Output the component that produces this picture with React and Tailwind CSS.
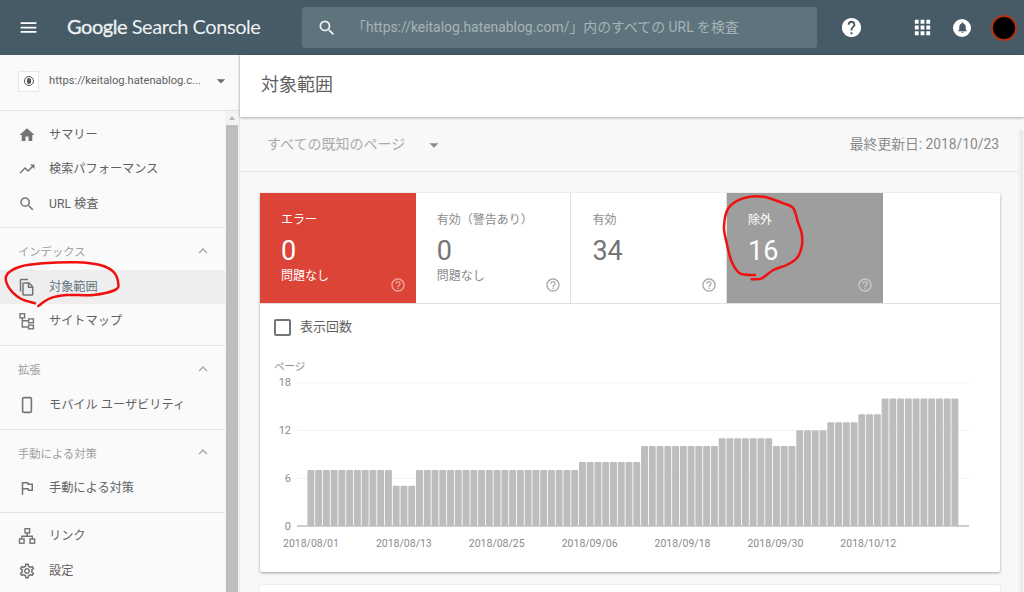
import {
  MdMenu, MdSearch, MdHelp, MdApps, MdNotifications, MdHome, MdTrendingUp,
  MdOutlineFlag, MdOutlineSettings, MdExpandLess, MdArrowDropDown, MdHelpOutline,
} from 'react-icons/md';

const font = { fontFamily: 'Roboto, "Noto Sans CJK JP", sans-serif' };

// 84 days of indexed page counts, read off the chart
const runs = [[7, 11], [5, 3], [7, 21], [8, 8], [10, 10], [11, 7], [10, 3], [12, 4], [13, 4], [14, 3], [16, 10]];
const bars = runs.flatMap(([value, count]) => Array(count).fill(value));
const dates = ['2018/08/01', '2018/08/13', '2018/08/25', '2018/09/06', '2018/09/18', '2018/09/30', '2018/10/12'];

function smooth(points) {
  let d = `M${points[0][0]} ${points[0][1]}`;
  for (let i = 0; i < points.length - 1; i++) {
    const p0 = points[Math.max(i - 1, 0)];
    const p1 = points[i];
    const p2 = points[i + 1];
    const p3 = points[Math.min(i + 2, points.length - 1)];
    const c1 = [p1[0] + (p2[0] - p0[0]) / 6, p1[1] + (p2[1] - p0[1]) / 6];
    const c2 = [p2[0] - (p3[0] - p1[0]) / 6, p2[1] - (p3[1] - p1[1]) / 6];
    d += ` C${c1[0]} ${c1[1]} ${c2[0]} ${c2[1]} ${p2[0]} ${p2[1]}`;
  }
  return d;
}

const ringSidebar = [[38.3, 306], [50, 298.3], [66.7, 295], [93.3, 295], [115, 290], [118.3, 283.3], [113.3, 271.7], [100, 265], [76.7, 262.3], [43.3, 263.3], [20, 266.7], [6.7, 275], [8.3, 286.7], [20, 298.3], [35, 303.3]];
const ringTab = [[755, 275], [740, 273.3], [731.7, 261.7], [726.7, 243.3], [724, 226.7], [728.3, 208.3], [743.3, 198.3], [763.3, 196.7], [783.3, 203.3], [793.3, 208.3], [798.3, 223.3], [801.7, 233.3], [801.7, 246.7], [796.7, 258.3], [786.7, 265], [773.3, 270], [761.7, 278.3], [751.7, 279.3]];

function CopyIcon() {
  return (
    <svg viewBox="0 0 18 18" className="w-[18px] h-[18px]" fill="none" stroke="currentColor" strokeWidth="1.5">
      <path d="M2.5 13.5V2.2c0-.4.3-.7.7-.7h6.8" />
      <path d="M5.8 5h5.2l3.7 3.8v7.4c0 .4-.3.8-.8.8H5.8c-.4 0-.8-.4-.8-.8V5.8c0-.4.4-.8.8-.8z" />
      <path d="M10.5 5v4.2h4.2" />
    </svg>
  );
}

function SitemapIcon() {
  return (
    <svg viewBox="0 0 18 18" className="w-[18px] h-[18px]" fill="none" stroke="currentColor" strokeWidth="1.4">
      <rect x="2" y="1.7" width="4.6" height="4.2" />
      <rect x="10.6" y="6.9" width="4.8" height="3.8" />
      <rect x="10.6" y="13" width="4.8" height="3.8" />
      <path d="M4.3 6v9h6.3M4.3 8.8h6.3" />
    </svg>
  );
}

function LinkIcon() {
  return (
    <svg viewBox="0 0 18 18" className="w-[18px] h-[18px]" fill="none" stroke="currentColor" strokeWidth="1.4">
      <rect x="7" y="1.7" width="4.6" height="4.2" />
      <rect x="1.5" y="12" width="4.6" height="4.2" />
      <rect x="12" y="12" width="4.6" height="4.2" />
      <path d="M9.2 6v3.2M3.8 12V9.2h10.5V12" />
    </svg>
  );
}

function PhoneIcon() {
  return (
    <svg viewBox="0 0 18 18" className="w-[18px] h-[18px]" fill="none" stroke="currentColor" strokeWidth="1.6">
      <rect x="4.6" y="1.6" width="8.8" height="14.8" rx="1.4" />
    </svg>
  );
}

function NavRow({ icon, label, active }) {
  return (
    <div className={`h-[34.5px] flex items-center pl-[18px] ${active ? 'bg-[#eeeeee] text-[#5f7480]' : 'text-[#616161]'}`}>
      <span className="w-[31px] flex items-center shrink-0 text-[#757575]">{icon}</span>
      <span className="text-[12.2px] whitespace-nowrap">{label}</span>
    </div>
  );
}

function NavSection({ title, children }) {
  return (
    <div className="border-b border-[#e3e3e3] pb-[6.5px]">
      <div className="h-[41.5px] pt-[6px] flex items-center justify-between pl-[18px] pr-[13px]">
        <span className="text-[11.3px] leading-[16px] pt-[3px] text-[#9e9e9e]">{title}</span>
        <MdExpandLess className="text-[#a8a8a8] -mt-[2px]" size={18} />
      </div>
      {children}
    </div>
  );
}

function Tab({ label, value, sub, className, helpClass, labelClass }) {
  return (
    <div className={`relative w-[155.7px] h-full pl-[21px] pt-[19px] ${className}`}>
      <div className={`text-[12px] leading-[17px] ${labelClass}`}>{label}</div>
      <div className="text-[27px] leading-[32px] mt-[6px]">{value}</div>
      {sub && <div className={`text-[12px] leading-[16px] mt-[1px] ${labelClass}`}>{sub}</div>}
      <MdHelpOutline className={`absolute bottom-[10px] ${helpClass}`} size={16} />
    </div>
  );
}

export default function App() {
  return (
    <div className="relative w-[1024px] h-[592px] overflow-hidden bg-[#f8f8f8] flex flex-col" style={font}>
      <header className="h-[55px] shrink-0 bg-[#465b66] flex items-center text-white">
        <MdMenu className="ml-[18px] shrink-0" size={21} />
        <div className="ml-[28px] w-[235px] pb-[3px] text-[20px] tracking-[-0.45px] whitespace-nowrap text-[#eef1f2]" style={{ fontFamily: 'Lato, sans-serif' }}>
          <span className="[-webkit-text-stroke:0.3px_#eef1f2]">Google</span> Search Console
        </div>
        <div className="w-[515px] h-[41px] bg-[#5f737c] rounded-[3px] flex items-center">
          <MdSearch className="ml-[15px] text-[#f1f3f4]" size={20} />
          <span className="ml-[15px] text-[13.9px] text-[#a6b3b9] whitespace-nowrap">「https://keitalog.hatenablog.com/」内のすべての URL を検査</span>
        </div>
        <MdHelp className="ml-[23px]" size={23} />
        <MdApps className="ml-[48px]" size={23} />
        <span className="ml-[19px] w-[18px] h-[18px] rounded-full bg-white flex items-center justify-center">
          <MdNotifications className="text-[#465b66]" size={13} />
        </span>
        <span className="ml-[20px] w-[26px] h-[26px] rounded-full bg-black border-[2.5px] border-[#b5340f]" />
      </header>

      <div className="flex-1 flex min-h-0">
        <aside className="w-[240px] shrink-0 bg-[#fafafa] border-r border-[#e8e8e8] flex flex-col">
          <div className="h-[56px] shrink-0 border-b border-[#e3e3e3] flex items-center pl-[18px] pr-[8px] pb-[3px]">
            <span className="w-[21px] h-[21px] shrink-0 bg-white border border-[#e6e6e6] flex items-center justify-center">
              <span className="w-[10px] h-[10px] rounded-full border border-[#555] flex items-center justify-center">
                <span className="w-[4px] h-[6px] rounded-[2px] bg-[#555]" />
              </span>
            </span>
            <span className="ml-[10px] text-[11.2px] text-[#616161] whitespace-nowrap">https://keitalog.hatenablog.c...</span>
            <MdArrowDropDown className="ml-auto text-[#6b6b6b]" size={20} />
          </div>
          <div className="flex-1 flex min-h-0">
            <nav className="w-[225px] shrink-0">
              <div className="border-b border-[#e3e3e3] pt-[6.5px] pb-[6px]">
                <NavRow icon={<MdHome size={18} />} label="サマリー" />
                <NavRow icon={<MdTrendingUp size={18} />} label="検索パフォーマンス" />
                <NavRow icon={<MdSearch size={18} />} label="URL 検査" />
              </div>
              <NavSection title="インデックス">
                <NavRow active icon={<CopyIcon />} label="対象範囲" />
                <NavRow icon={<SitemapIcon />} label="サイトマップ" />
              </NavSection>
              <NavSection title="拡張">
                <NavRow icon={<PhoneIcon />} label="モバイル ユーザビリティ" />
              </NavSection>
              <NavSection title="手動による対策">
                <NavRow icon={<MdOutlineFlag size={18} />} label="手動による対策" />
              </NavSection>
              <div className="pt-[6px]">
                <NavRow icon={<LinkIcon />} label="リンク" />
                <NavRow icon={<MdOutlineSettings size={18} />} label="設定" />
              </div>
            </nav>
            <div className="w-[14px] flex flex-col bg-[#f3f3f3]">
              <div className="h-[14px] flex items-center justify-center">
                <span className="border-x-[3px] border-x-transparent border-b-[4px] border-b-[#b5b5b5]" />
              </div>
              <div className="flex-1 mx-px bg-[#bdbdbd]" />
            </div>
          </div>
        </aside>

        <main className="flex-1 min-w-0 flex flex-col relative">
          <div className="h-[62px] shrink-0 bg-white shadow-[0_1px_3px_rgba(0,0,0,0.3)] flex items-center pl-[21px] pb-[4px] text-[18px] text-[#5f5f5f] relative">対象範囲</div>
          <div className="h-[55px] shrink-0 border-b border-[#e4e4e4] flex items-center pl-[27px] pr-[25px] pt-[1px]">
            <span className="text-[14px] text-[#ababab]">すべての既知のページ</span>
            <MdArrowDropDown className="ml-[18px] text-[#8c8c8c]" size={22} />
            <span className="ml-auto text-[13.8px] text-[#8a8a8a]">最終更新日: 2018/10/23</span>
          </div>

          <div className="ml-[20px] mr-[24px] mt-[21px] h-[379px] shrink-0 bg-white rounded-[2px] shadow-[0_1px_3px_rgba(0,0,0,0.35)]">
            <div className="h-[110.5px] flex border-b border-[#e0e0e0]">
              <Tab label="エラー" value="0" sub="問題なし" className="bg-[#db4437] text-white" labelClass="text-white" helpClass="right-[10px] text-[#eda59e]" />
              <Tab label="有効（警告あり）" value="0" sub="問題なし" className="text-[#757575] border-r border-[#e0e0e0]" labelClass="text-[#8c8c8c]" helpClass="right-[9px] text-[#a8a8a8]" />
              <Tab label="有効" value="34" className="text-[#757575] border-r border-[#e0e0e0]" labelClass="text-[#8c8c8c]" helpClass="right-[9px] text-[#a8a8a8]" />
              <Tab label="除外" value="16" className="bg-[#9e9e9e] text-white" labelClass="text-white" helpClass="right-[10px] text-[#c9c9c9]" />
            </div>
            <div className="flex items-center h-[46px] pl-[14px] pt-[1px]">
              <span className="w-[17px] h-[17px] rounded-[2px] border-2 border-[#757575]" />
              <span className="ml-[9px] text-[13px] text-[#616161]">表示回数</span>
            </div>
            <div className="pl-[14px] mt-[10px] text-[10.5px] leading-[14px] text-[#8c8c8c]">ページ</div>
            <div className="flex mt-[8px]">
              <div className="w-[31px] h-[144px] flex flex-col justify-between items-end text-[11px] leading-[0] text-[#8a8a8a] mt-[1px]">
                <span className="h-0">18</span>
                <span className="h-0">12</span>
                <span className="h-0">6</span>
                <span className="h-0">0</span>
              </div>
              <svg width="672" height="146" viewBox="0 0 672 146" className="ml-[6px] block">
                {[1, 48.6, 96.3].map((y) => (
                  <line key={y} x1="0" x2="672" y1={y} y2={y} stroke="#f2f2f2" />
                ))}
                {bars.map((value, i) => (
                  <rect key={i} x={10.4 + i * 7.76} y={143.5 - value * 7.94} width="6.9" height={value * 7.94} rx="1" fill="#bdbdbd" />
                ))}
                <line x1="0" x2="672" y1="144" y2="144" stroke="#9e9e9e" />
              </svg>
            </div>
            <div className="flex pl-[23px] mt-[8px]">
              {dates.map((date) => (
                <span key={date} className="w-[92.9px] shrink-0 text-[10.5px] text-[#8a8a8a]">{date}</span>
              ))}
            </div>
          </div>

          <div className="ml-[20px] mr-[24px] mt-[13px] h-[40px] shrink-0 bg-white rounded-[2px] shadow-[0_0_2px_rgba(0,0,0,0.15)]" />

          <div className="absolute right-0 top-[75px] bottom-0 w-[6px] bg-[#f1f1f1]">
            <div className="absolute left-[3px] top-0 bottom-0 w-[1px] bg-[#e3e3e3]" />
          </div>
        </main>
      </div>

      <svg className="absolute inset-0 pointer-events-none" width="1024" height="592" viewBox="0 0 1024 592" fill="none" stroke="#f01010" strokeWidth="2.5" strokeLinecap="round">
        <path d={smooth(ringSidebar)} />
        <path d={smooth(ringTab)} />
      </svg>
    </div>
  );
}
